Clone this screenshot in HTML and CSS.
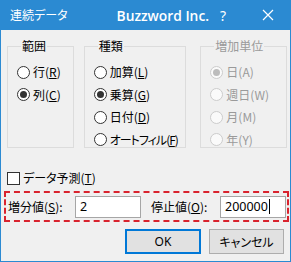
FILE: index.html
```html
<!DOCTYPE html>
<html lang="ja">
<head>
<meta charset="utf-8">
<link rel="stylesheet" href="styles.css">
</head>
<body>
<div class="dialog">
  <div class="titlebar">
    <span class="title">連続データ</span>
    <span class="brand">Buzzword Inc.</span>
    <span class="help">?</span>
    <span class="close"><svg width="12" height="12" viewBox="0 0 12 12"><path d="M1 1L11 11M11 1L1 11" stroke="#fff" stroke-width="1.2" fill="none"/></svg></span>
  </div>
  <div class="content">
    <div class="groups">
      <fieldset class="group g1">
        <legend>範囲</legend>
        <div class="opt"><span class="radio"></span>行(<u>R</u>)</div>
        <div class="opt"><span class="radio on"></span>列(<u>C</u>)</div>
      </fieldset>
      <fieldset class="group g2">
        <legend>種類</legend>
        <div class="opt"><span class="radio"></span>加算(<u>L</u>)</div>
        <div class="opt"><span class="radio on"></span>乗算(<u>G</u>)</div>
        <div class="opt"><span class="radio"></span>日付(<u>D</u>)</div>
        <div class="opt tight"><span class="radio"></span>オートフィル(<u>F</u>)</div>
      </fieldset>
      <fieldset class="group g3 disabled">
        <legend>増加単位</legend>
        <div class="opt"><span class="radio on"></span>日(A)</div>
        <div class="opt"><span class="radio"></span>週日(W)</div>
        <div class="opt"><span class="radio"></span>月(M)</div>
        <div class="opt"><span class="radio"></span>年(Y)</div>
      </fieldset>
    </div>
    <div class="check-row"><span class="checkbox"></span>データ予測(<u>T</u>)</div>
    <div class="values">
      <span class="lbl">増分値(<u>S</u>):</span>
      <div class="input">2</div>
      <span class="lbl lbl2">停止値(<u>O</u>):</span>
      <div class="input">200000<span class="caret"></span></div>
    </div>
    <div class="buttons">
      <div class="btn primary">OK</div>
      <div class="btn">キャンセル</div>
    </div>
  </div>
</div>
</body>
</html>
```
FILE: styles.css
```css
* { box-sizing: border-box; }
html, body { margin: 0; padding: 0; }
body {
  width: 291px;
  height: 262px;
  font-family: "Noto Sans CJK JP", "Noto Sans", sans-serif;
  font-feature-settings: "palt";
  font-size: 12px;
  color: #000;
  background: #f0f0f0;
}
.dialog {
  width: 291px;
  height: 262px;
  border: 1px solid #2b8ad2;
  border-top: none;
  background: #f0f0f0;
  display: flex;
  flex-direction: column;
}
.titlebar {
  height: 30px;
  margin: 0 -1px;
  background: #2b8ad2;
  color: #fff;
  display: flex;
  align-items: center;
  padding-left: 10px;
}
.title { font-size: 12px; line-height: 16px; }
.brand {
  font-family: "Open Sans", "Noto Sans", sans-serif;
  font-size: 13.8px;
  font-weight: 600;
  margin-left: 49px;
}
.help {
  font-family: "Noto Sans", sans-serif;
  font-size: 14px;
  margin-left: 11px;
}
.close {
  margin-left: auto;
  width: 46px;
  height: 30px;
  display: flex;
  align-items: center;
  justify-content: center;
}
.content {
  padding: 8px 3px 0 6px;
  flex: 1;
}
.groups {
  display: flex;
  align-items: flex-start;
}
.group {
  margin: 0;
  border: 1px solid #dcdcdc;
  padding: 7px 0 0 9px;
  height: 110px;
  min-width: 0;
}
.group legend {
  padding: 0 1px;
  margin-left: 4px;
  line-height: 16px;
  font-size: 12px;
}
.g1 { width: 67px; }
.g2 { width: 103px; margin-left: 10px; }
.g3 { width: 87px; margin-left: 14px; padding-left: 9px; }
.opt {
  height: 22.5px;
  display: flex;
  align-items: center;
  white-space: nowrap;
  line-height: 16px;
}
.opt.tight { letter-spacing: -1px; }
.radio {
  width: 13px;
  height: 13px;
  border: 1px solid #333;
  border-radius: 50%;
  background: #fff;
  margin-right: 3px;
  display: flex;
  align-items: center;
  justify-content: center;
  flex: none;
}
.radio.on::after {
  content: "";
  width: 7px;
  height: 7px;
  border-radius: 50%;
  background: #333;
}
.disabled { color: #9a9a9a; }
.disabled legend { color: #9a9a9a; }
.disabled .radio { border-color: #cccccc; background: #fafafa; }
.disabled .radio.on::after { background: #bcbcbc; }
.check-row {
  margin-top: 22px;
  height: 16px;
  display: flex;
  align-items: center;
  line-height: 16px;
}
.checkbox {
  width: 13px;
  height: 13px;
  border: 1px solid #333;
  background: #fff;
  margin-right: 3px;
  flex: none;
}
.values {
  margin-top: 5px;
  margin-left: -3px;
  width: 285px;
  height: 31px;
  border: 2px dashed #d9232e;
  display: flex;
  align-items: center;
  padding-left: 2px;
}
.lbl { line-height: 16px; white-space: nowrap; width: 67px; }
.lbl2 { width: 69px; margin-left: 10px; }
.input {
  width: 66px;
  height: 22px;
  border: 1px solid #a6a6a6;
  background: #fff;
  padding-left: 4px;
  display: flex;
  align-items: center;
  font-family: "Noto Sans", sans-serif;
  font-size: 12.5px;
}
.caret {
  width: 1px;
  height: 15px;
  background: #000;
  margin-left: 1px;
}
.buttons {
  display: flex;
  justify-content: flex-end;
  margin-top: 7px;
  padding-right: 3px;
  gap: 8px;
}
.btn {
  width: 75px;
  height: 25px;
  border: 1px solid #adadad;
  background: #e1e1e1;
  display: flex;
  align-items: center;
  justify-content: center;
  line-height: 16px;
}
.btn.primary {
  width: 76px;
  border: 2px solid #0078d7;
  font-family: "Noto Sans", sans-serif;
}
```
